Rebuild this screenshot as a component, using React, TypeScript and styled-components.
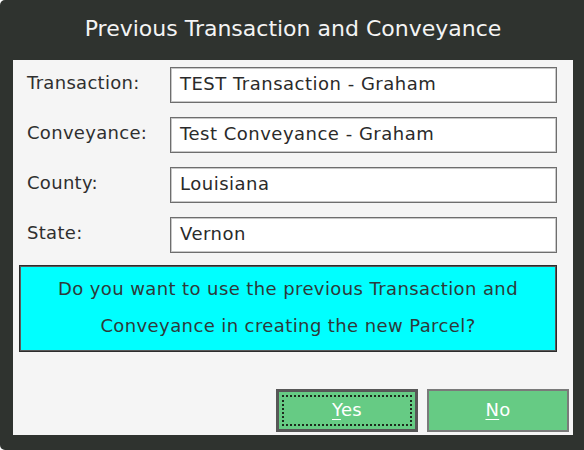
import React from "react";
import styled, { createGlobalStyle } from "styled-components";

const Global = createGlobalStyle`
  html, body { margin: 0; padding: 0; background: #ffffff; }
  body { font-family: "DejaVu Sans", "Noto Sans", sans-serif; }
`;

const Window = styled.div`
  width: 584px;
  height: 450px;
  background: #2f332f;
  border-radius: 5px 0 0 5px;
  display: flex;
  flex-direction: column;
  box-sizing: border-box;
  padding: 0 11px 15px 13px;
`;

const Title = styled.div`
  height: 60px;
  display: flex;
  align-items: center;
  justify-content: center;
  color: #f4f4f4;
  font-size: 22px;
  padding-bottom: 4px;
  box-sizing: border-box;
`;

const Panel = styled.div`
  flex: 1;
  background: #f5f5f5;
  display: flex;
  flex-direction: column;
  padding: 7px 16px 3px 6px;
`;

const Form = styled.div`
  display: grid;
  grid-template-columns: 151px 387px;
  row-gap: 14px;
`;

const Label = styled.div`
  height: 36px;
  display: flex;
  align-items: center;
  padding-left: 8px;
  padding-bottom: 6px;
  box-sizing: border-box;
  font-size: 18px;
  color: #2f2f2f;
  letter-spacing: 0.3px;
`;

const Field = styled.div`
  height: 36px;
  box-sizing: border-box;
  background: #ffffff;
  border: 1px solid #6e6e6e;
  box-shadow: inset 0 0 0 1px #c8c8c8;
  display: flex;
  align-items: center;
  padding: 0 0 4px 9px;
  font-size: 18px;
  letter-spacing: 0.5px;
  color: #2a2a2a;
`;

const Prompt = styled.div`
  margin-top: 12px;
  height: 87px;
  box-sizing: border-box;
  background: #00ffff;
  border: 1px solid #2c2c2c;
  box-shadow: inset 0 0 0 1px #5a5a5a;
  display: flex;
  flex-direction: column;
  align-items: center;
  justify-content: center;
  font-size: 18px;
  letter-spacing: 0.4px;
  color: #2e3a3a;
  line-height: 37px;
  padding-bottom: 4px;
  text-align: center;
`;

const Buttons = styled.div`
  margin-top: auto;
  display: flex;
  justify-content: flex-end;
  gap: 9px;
  margin-right: -12px;
`;

const Button = styled.button<{ $focused?: boolean }>`
  width: 142px;
  height: 43px;
  box-sizing: border-box;
  background: #66cb84;
  color: #ffffff;
  font-family: "DejaVu Sans", "Noto Sans", sans-serif;
  font-size: 18px;
  letter-spacing: 0.3px;
  border: ${(p) => (p.$focused ? "3px solid #575757" : "2px solid #7a7a7a")};
  position: relative;
  padding: 0 0 3px 0;
  cursor: pointer;
  &::after {
    content: "";
    display: ${(p) => (p.$focused ? "block" : "none")};
    position: absolute;
    inset: 3px;
    border: 2px dotted #1e2a1e;
  }
  u { text-underline-offset: 3px; }
`;

export default function App() {
  const rows: [string, string][] = [
    ["Transaction:", "TEST Transaction - Graham"],
    ["Conveyance:", "Test Conveyance - Graham"],
    ["County:", "Louisiana"],
    ["State:", "Vernon"],
  ];
  return (
    <>
      <Global />
      <Window>
        <Title>Previous Transaction and Conveyance</Title>
        <Panel>
          <Form>
            {rows.map(([l, v]) => (
              <React.Fragment key={l}>
                <Label>{l}</Label>
                <Field>{v}</Field>
              </React.Fragment>
            ))}
          </Form>
          <Prompt>
            <div>Do you want to use the previous Transaction and</div>
            <div>Conveyance in creating the new Parcel?</div>
          </Prompt>
          <Buttons>
            <Button $focused>
              <u>Y</u>es
            </Button>
            <Button>
              <u>N</u>o
            </Button>
          </Buttons>
        </Panel>
      </Window>
    </>
  );
}
